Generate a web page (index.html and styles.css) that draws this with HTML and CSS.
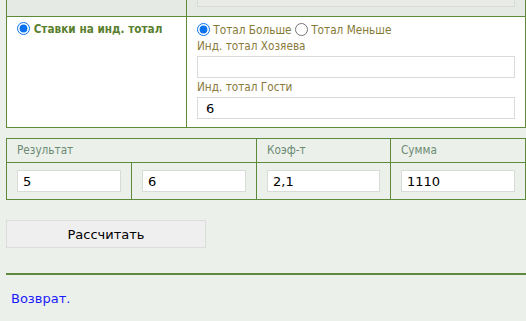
FILE: index.html
```html
<!DOCTYPE html>
<html lang="ru">

<head>
    <meta charset="UTF-8">
    <meta name="viewport" content="width=device-width, initial-scale=1.0">
    <title>Ставки</title>
    <link rel="stylesheet" href="styles.css">
</head>

<body>
    <div class="page">
        <table class="bets">
            <tr class="prev">
                <td class="c1"></td>
                <td><input type="text" class="inp inp-off" disabled></td>
            </tr>
            <tr>
                <td class="c1">
                    <label class="kind"><input type="radio" name="kind" checked> Ставки на инд. тотал</label>
                </td>
                <td>
                    <div class="line">
                        <label><input type="radio" name="tot" checked> Тотал Больше</label>
                        <label><input type="radio" name="tot"> Тотал Меньше</label>
                    </div>
                    <div class="cap">Инд. тотал Хозяева</div>
                    <input type="text" class="inp">
                    <div class="cap">Инд. тотал Гости</div>
                    <input type="text" class="inp" value="6">
                </td>
            </tr>
        </table>

        <table class="res">
            <tr class="head">
                <td colspan="2">Результат</td>
                <td>Коэф-т</td>
                <td>Сумма</td>
            </tr>
            <tr>
                <td class="w1"><input type="text" class="inp" value="5"></td>
                <td class="w1"><input type="text" class="inp" value="6"></td>
                <td class="w2"><input type="text" class="inp" value="2,1"></td>
                <td><input type="text" class="inp" value="1110"></td>
            </tr>
        </table>

        <button type="button" class="calc">Рассчитать</button>

        <hr class="sep">

        <a href="#" class="back">Возврат.</a>
    </div>
</body>

</html>
```

FILE: styles.css
```css
* {
    margin: 0;
    padding: 0;
    box-sizing: border-box;
}

body {
    background-color: #ecf0ea;
    font-family: "DejaVu Sans Condensed", "DejaVu Sans", sans-serif;
    font-size: 11.7px;
    overflow: hidden;
}

.page {
    padding: 0 0 0 6px;
    margin-top: -20px;
}

table {
    border-collapse: collapse;
    width: 520px;
    background-color: #fff;
}

td {
    border: 1px solid #5e8a3c;
    vertical-align: top;
}

/* таблица ставок */
.bets td {
    padding: 5px 10px 7px 10px;
}

.bets .c1 {
    width: 180px;
}

.bets .prev td {
    background-color: #e6eae4;
    height: 36px;
    padding: 4px 10px;
}

.kind {
    font-weight: bold;
    color: #5a7f2e;
}

.line {
    color: #857a36;
    height: 16px;
    line-height: 16px;
}

input[type="radio"] {
    width: 13px;
    height: 13px;
    margin: 0;
    vertical-align: -2px;
    accent-color: #0a72f0;
}

.cap {
    color: #8a7a3c;
    line-height: 16px;
    margin: 0 0 2px;
}

.inp {
    display: block;
    width: 100%;
    height: 22px;
    border: 1px solid #d8dcd6;
    background-color: #fff;
    padding: 0 8px;
    font-family: "DejaVu Sans", sans-serif;
    font-size: 13px;
    color: #000;
    margin-bottom: 1px;
}

.inp-off {
    background-color: #e8ebe6;
    margin: 0;
}

/* таблица результата */
.res {
    margin-top: 10px;
    background-color: #ecf0ea;
}

.res td {
    padding: 7px 10px 7px 10px;
}

.res .head td {
    color: #6a8a72;
    padding: 0 10px;
    height: 24px;
    line-height: 23px;
}

.res .w1 {
    width: 125px;
}

.res .w2 {
    width: 134px;
}

.res .inp {
    margin: 0;
    padding: 0 5px;
}

.calc {
    display: block;
    margin-top: 20px;
    width: 200px;
    height: 28px;
    background-color: #efefef;
    border: 1px solid #dcdcdc;
    font-family: "DejaVu Sans", sans-serif;
    font-size: 13px;
    color: #000;
}

.sep {
    border: 0;
    height: 2px;
    background-color: #5e8a3c;
    margin-top: 25px;
}

.back {
    display: inline-block;
    margin: 16px 0 0 5px;
    font-family: "DejaVu Sans", sans-serif;
    font-size: 13px;
    color: #1a1aff;
    text-decoration: none;
}
```
